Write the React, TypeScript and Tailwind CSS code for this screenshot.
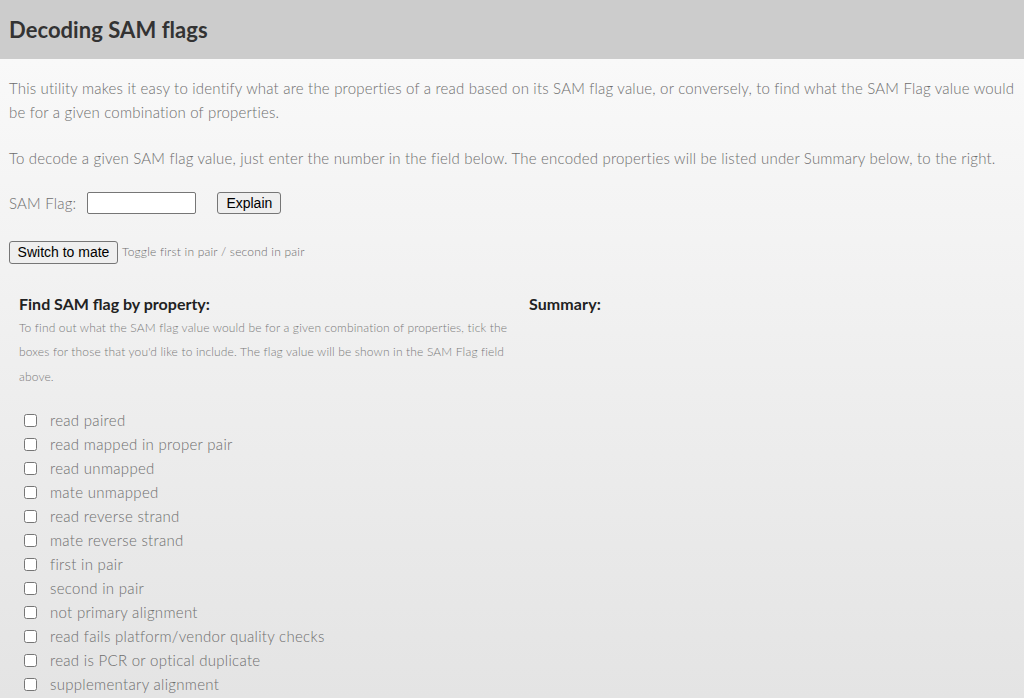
import React, { useState } from 'react';

const FLAGS = [
  'read paired',
  'read mapped in proper pair',
  'read unmapped',
  'mate unmapped',
  'read reverse strand',
  'mate reverse strand',
  'first in pair',
  'second in pair',
  'not primary alignment',
  'read fails platform/vendor quality checks',
  'read is PCR or optical duplicate',
  'supplementary alignment',
];

const btn =
  "bg-[#efefef] border border-[#767676] rounded-[3px] text-black text-[14px] font-['Liberation_Sans',Arial,sans-serif] font-normal tracking-normal leading-none";

export default function App() {
  const [checked, setChecked] = useState<boolean[]>(FLAGS.map(() => false));
  const [flag, setFlag] = useState('');

  const toggle = (i: number) => {
    const next = checked.map((c, j) => (j === i ? !c : c));
    setChecked(next);
    const value = next.reduce((acc, c, j) => (c ? acc + (1 << j) : acc), 0);
    setFlag(value ? String(value) : '');
  };

  return (
    <div className="min-h-[698px] bg-gradient-to-b from-[#fbfbfb] to-[#e4e4e4] font-['Lato',sans-serif] font-light text-[#6e6e6e] tracking-[0.2px]">
      <div className="h-[59px] bg-[#cccccc] flex items-center px-[9px]">
        <h1 className="text-[22px] font-bold text-[#333] tracking-[0.05px]">Decoding SAM flags</h1>
      </div>

      <div className="px-[9px]">
        <p className="mt-[17px] text-[15px] leading-[24px]">
          This utility makes it easy to identify what are the properties of a read based on its SAM flag value, or conversely, to find what the SAM Flag value would be for a given combination of properties.
        </p>
        <p className="mt-[22px] text-[15px] leading-[24px]">
          To decode a given SAM flag value, just enter the number in the field below. The encoded properties will be listed under Summary below, to the right.
        </p>

        <div className="mt-[22px] flex items-center text-[15px]">
          <span>SAM Flag:</span>
          <input
            type="text"
            value={flag}
            onChange={(e) => setFlag(e.target.value)}
            className="ml-[11px] w-[109px] h-[22px] bg-white border border-[#767676] rounded-[2px] px-1 text-[13px] text-black"
          />
          <button className={`${btn} ml-[21px] w-[64px] h-[22px]`}>Explain</button>
        </div>

        <div className="mt-[26px] flex items-center">
          <button className={`${btn} w-[109px] h-[23px]`}>Switch to mate</button>
          <span className="ml-[4px] text-[12px]">Toggle first in pair / second in pair</span>
        </div>

        <div className="mt-[30px] grid grid-cols-[510px_1fr]">
          <div className="px-[10px]">
            <h3 className="text-[16px] font-bold text-[#222] leading-[20px] tracking-normal">Find SAM flag by property:</h3>
            <p className="mt-[2px] text-[12px] leading-[24.5px] text-[#7a7a7a] tracking-[0.15px]">
              To find out what the SAM flag value would be for a given combination of properties, tick the boxes for those that you'd like to include. The flag value will be shown in the SAM Flag field above.
            </p>
            <ul className="mt-[19px]">
              {FLAGS.map((f, i) => (
                <li key={f} className="flex items-center h-[24px] text-[15px] tracking-[0.3px]">
                  <input
                    type="checkbox"
                    checked={checked[i]}
                    onChange={() => toggle(i)}
                    className="ml-[5px] w-[13px] h-[13px]"
                  />
                  <span className="ml-[13px]">{f}</span>
                </li>
              ))}
            </ul>
          </div>
          <div className="px-[10px]">
            <h3 className="text-[16px] font-bold text-[#222] leading-[20px] tracking-[0.1px]">Summary:</h3>
          </div>
        </div>
      </div>
    </div>
  );
}
